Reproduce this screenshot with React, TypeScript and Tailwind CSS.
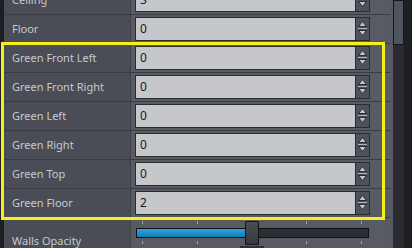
const rows = [
  { label: 'Ceiling', value: '3' },
  { label: 'Floor', value: '0' },
  { label: 'Green Front Left', value: '0' },
  { label: 'Green Front Right', value: '0' },
  { label: 'Green Left', value: '0' },
  { label: 'Green Right', value: '0' },
  { label: 'Green Top', value: '0' },
  { label: 'Green Floor', value: '2' },
];

const ticks = [6, 61, 115, 170, 225];

const Spinner = () => (
  <div className="h-[24px] w-[14px] bg-[#4f525a] border border-[#2a2b2f] border-l-0">
    <svg width="13" height="22" viewBox="0 0 13 22">
      <path d="M2.5 8.5 L6.5 3.5 L10.5 8.5 Z" fill="#c4c6cb" stroke="#2a2b2f" strokeWidth="1" />
      <path d="M2 10.5 H11" stroke="#aeb1b7" strokeWidth="1" />
      <path d="M2.5 12.5 L6.5 17.5 L10.5 12.5 Z" fill="#c4c6cb" stroke="#2a2b2f" strokeWidth="1" />
    </svg>
  </div>
);

const Row = ({ label, value }: { label: string; value: string }) => (
  <div className="flex h-[29px] border-b border-[#3a3c42]">
    <div className="w-[127px] bg-[#4a4d55] border-r border-[#3e4047] flex items-center pl-[8px] text-[11px] text-[#c4cad4]">
      {label}
    </div>
    <div className="flex-1 bg-[#585b64] flex items-center pl-[4px]">
      <div className="h-[24px] w-[221px] bg-[#c6c7cb] border border-[#2a2b2f] flex items-center pl-[4px] text-[12px] text-[#1b1530]">
        {value}
      </div>
      <Spinner />
    </div>
  </div>
);

const App = () => {
  return (
    <div
      className="relative w-[412px] h-[248px] overflow-hidden bg-[#1d1e22] flex"
      style={{ fontFamily: '"Noto Sans", "DejaVu Sans", sans-serif' }}
    >
      {/* property panel */}
      <div className="w-[390px] pl-[4px]">
        <div className="mt-[-14px]">
          {rows.map((r) => (
            <Row key={r.label} label={r.label} value={r.value} />
          ))}
          <div className="flex h-[46px]">
            <div className="w-[127px] bg-[#4a4d55] border-r border-[#3e4047] flex items-center pl-[8px] text-[11px] text-[#c4cad4]">
              Walls Opacity
            </div>
            <div className="flex-1 bg-[#585b64] pl-[5px]">
              <div className="relative w-[233px] h-[46px] pt-[10px]">
                <div className="h-[10px] border border-[#101113] bg-[#2d2e33] flex">
                  <div className="w-[115px] bg-gradient-to-b from-[#2aa6e2] to-[#167bb2]" />
                </div>
                {ticks.map((t) => (
                  <div key={t} className="absolute top-[3px] w-px h-[3px] bg-[#a2a6ad]" style={{ left: t }} />
                ))}
                {ticks.map((t) => (
                  <div key={'b' + t} className="absolute top-[23px] w-px h-[3px] bg-[#a2a6ad]" style={{ left: t }} />
                ))}
                <div className="absolute left-[109px] top-[3px] w-[14px] h-[24px] bg-gradient-to-b from-[#4a4d54] to-[#36383d] border border-[#141517] rounded-[1px]" />
                <div className="absolute left-[104px] top-[28px] w-[24px] h-[4px] bg-[#2e3034]" />
              </div>
            </div>
          </div>
        </div>
      </div>

      {/* scrollbar */}
      <div className="w-[3px] bg-[#565961]" />
      <div className="w-[11px] bg-[#2a2b30]">
        <div className="h-[45px] bg-[#4f535b] border border-[#16171a]" />
      </div>
      <div className="w-[8px] bg-[#1e1f23]" />

      {/* highlight box */}
      <div className="absolute left-[1px] top-[42px] w-[384px] h-[178px] border-[3px] border-[#f5ef1a]" />
    </div>
  );
};

export default App;
